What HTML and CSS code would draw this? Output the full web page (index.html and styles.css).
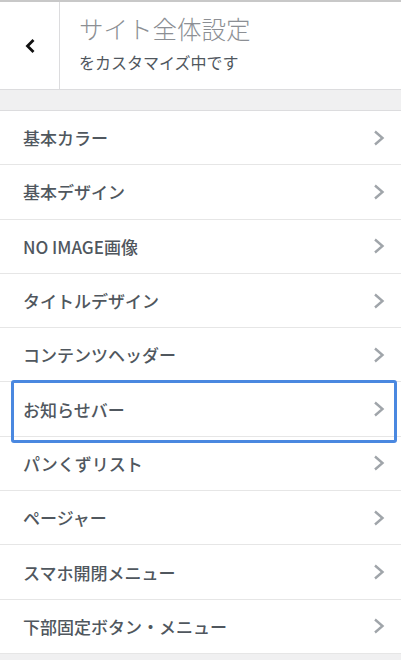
FILE: index.html
```html
<!DOCTYPE html>
<html lang="ja">
<head>
  <meta charset="UTF-8" />
  <title>サイト全体設定</title>
  <link rel="stylesheet" href="styles.css">
</head>
<body>
  <div id="panel">
    <div id="header">
      <div class="back">
        <svg width="14" height="18" viewBox="0 0 14 18"><polyline points="10.5,3 4.5,9 10.5,15" fill="none" stroke="#111" stroke-width="2.8" /></svg>
      </div>
      <div class="title-area">
        <div class="title">サイト全体設定</div>
        <div class="subtitle">をカスタマイズ中です</div>
      </div>
    </div>
    <div class="gap"></div>
    <ul id="menu">
      <li class="item">基本カラー<svg class="arrow" viewBox="0 0 12 16"><polyline points="2,1.5 9.5,8 2,14.5" /></svg></li>
      <li class="item">基本デザイン<svg class="arrow" viewBox="0 0 12 16"><polyline points="2,1.5 9.5,8 2,14.5" /></svg></li>
      <li class="item">NO IMAGE画像<svg class="arrow" viewBox="0 0 12 16"><polyline points="2,1.5 9.5,8 2,14.5" /></svg></li>
      <li class="item">タイトルデザイン<svg class="arrow" viewBox="0 0 12 16"><polyline points="2,1.5 9.5,8 2,14.5" /></svg></li>
      <li class="item">コンテンツヘッダー<svg class="arrow" viewBox="0 0 12 16"><polyline points="2,1.5 9.5,8 2,14.5" /></svg></li>
      <li class="item focus">お知らせバー<svg class="arrow" viewBox="0 0 12 16"><polyline points="2,1.5 9.5,8 2,14.5" /></svg></li>
      <li class="item">パンくずリスト<svg class="arrow" viewBox="0 0 12 16"><polyline points="2,1.5 9.5,8 2,14.5" /></svg></li>
      <li class="item">ページャー<svg class="arrow" viewBox="0 0 12 16"><polyline points="2,1.5 9.5,8 2,14.5" /></svg></li>
      <li class="item">スマホ開閉メニュー<svg class="arrow" viewBox="0 0 12 16"><polyline points="2,1.5 9.5,8 2,14.5" /></svg></li>
      <li class="item">下部固定ボタン・メニュー<svg class="arrow" viewBox="0 0 12 16"><polyline points="2,1.5 9.5,8 2,14.5" /></svg></li>
    </ul>
  </div>
</body>
</html>
```

FILE: styles.css
```css
body {
  margin: 0;
  padding: 0;
  background-color: #f0f0f1;
  font-family: "Noto Sans CJK JP", "Noto Sans", sans-serif;
}

#panel {
  width: 401px;
  height: 660px;
  overflow: hidden;
  border-top: 2px solid #c8c8c8;
  box-sizing: border-box;
}

#header {
  display: flex;
  height: 87px;
  background-color: #fff;
  border-bottom: 1px solid #dcdcde;
}

.back {
  width: 59px;
  border-right: 1px solid #dcdcde;
  display: flex;
  align-items: center;
  justify-content: center;
}

.title-area {
  padding: 11px 0 0 19px;
}

.title {
  font-size: 24.5px;
  font-weight: 300;
  color: #8c8f94;
  line-height: 32px;
}

.subtitle {
  font-size: 16px;
  color: #50575e;
  margin-top: 7px;
  line-height: 20px;
}

.gap {
  height: 20px;
  border-bottom: 1px solid #dcdcde;
}

#menu {
  list-style: none;
  margin: 0;
  padding: 0;
}

.item {
  position: relative;
  height: 53.3px;
  display: flex;
  align-items: center;
  justify-content: space-between;
  padding: 0 16px 0 23px;
  background-color: #fff;
  border-bottom: 1px solid #e6e6e6;
  font-size: 17px;
  font-weight: 500;
  color: #50575e;
}

.arrow {
  width: 12px;
  height: 16px;
  fill: none;
  stroke: #a0a5aa;
  stroke-width: 2.4;
}

.focus::before {
  content: "";
  position: absolute;
  z-index: 1;
  left: 11px;
  right: 4px;
  top: -2px;
  bottom: -7px;
  border: 3.5px solid #4a88e0;
  border-radius: 3px;
}
```
